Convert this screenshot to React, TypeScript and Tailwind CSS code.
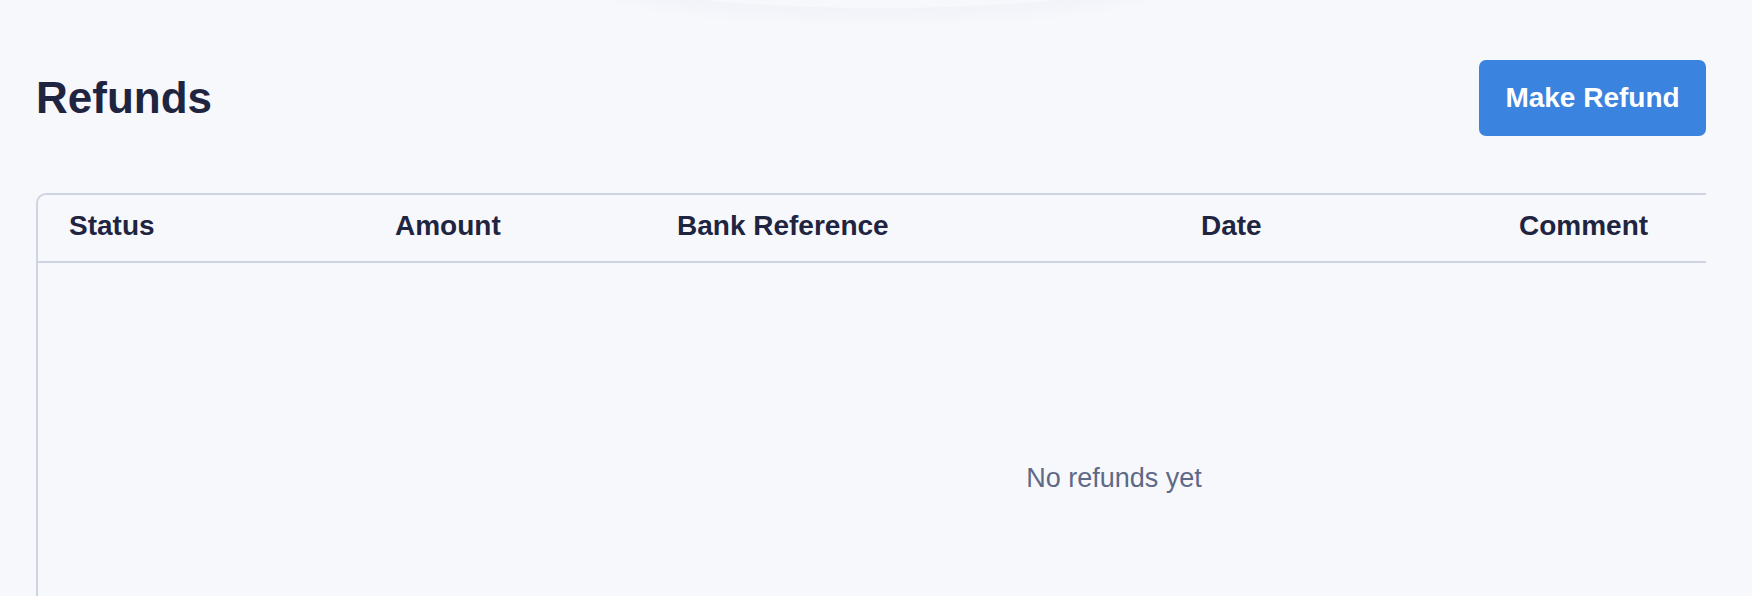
const columns = [
  { label: "Status", width: "w-[326px]" },
  { label: "Amount", width: "w-[282px]" },
  { label: "Bank Reference", width: "w-[524px]" },
  { label: "Date", width: "w-[318px]" },
  { label: "Comment", width: "w-[320px]" },
];

export default function App() {
  return (
    <div className="relative h-[596px] overflow-hidden bg-[#f7f8fc] font-['Liberation_Sans',Arial,sans-serif] text-[#1f2541]">
      <div className="pointer-events-none absolute left-[600px] top-[-62px] h-[70px] w-[560px] rounded-[50%] bg-[#f7f8fc] shadow-[0_4px_22px_rgba(40,50,90,0.04)]" />

      <section className="pl-[36px] pr-[46px] pt-[60px]">
        <div className="flex items-center justify-between">
          <h1 className="text-[44px] font-bold leading-none">Refunds</h1>
          <button
            type="button"
            className="flex h-[76px] w-[227px] items-center justify-center rounded-[7px] bg-[#3a83de] text-[28px] font-bold text-white"
          >
            Make Refund
          </button>
        </div>

        <div className="mt-[57px] overflow-hidden">
          <div className="w-[2156px] rounded-[10px] border-2 border-[#cfd4e2]">
            <div className="flex h-[68px] items-center border-b-2 border-[#cfd4e2] pb-[4px]">
              {columns.map((col) => (
                <div key={col.label} className={`${col.width} shrink-0 pl-[31px] text-[28px] font-bold leading-none`}>
                  {col.label}
                </div>
              ))}
            </div>
            <div className="flex h-[430px] items-center justify-center">
              <p className="text-[27px] leading-none text-[#5e6987]">No refunds yet</p>
            </div>
          </div>
        </div>
      </section>
    </div>
  );
}
